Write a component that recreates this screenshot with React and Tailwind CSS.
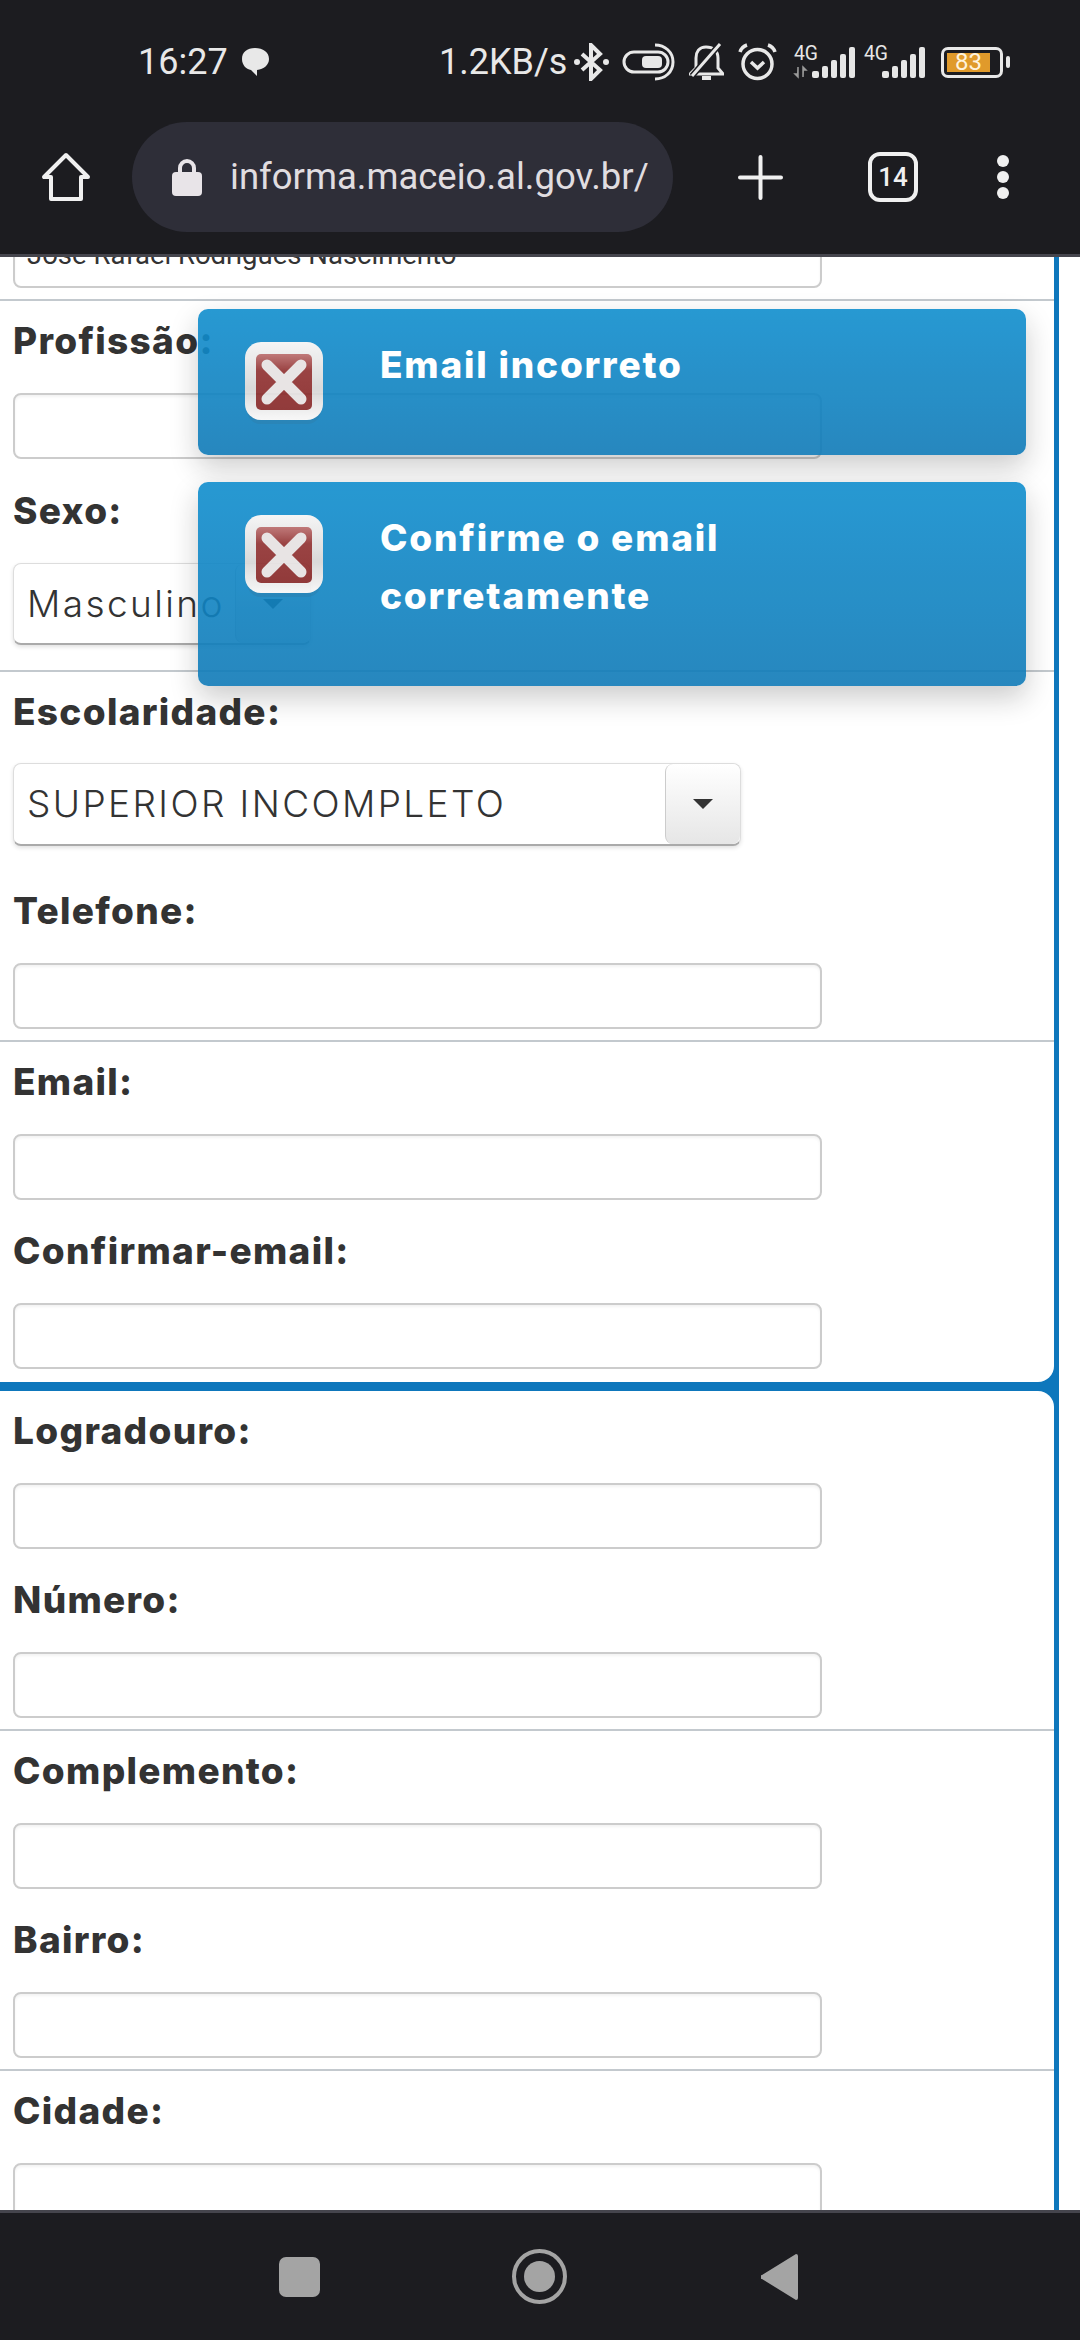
import React from 'react';

function SignalBars({ withArrows }) {
  return (
    <svg width="62" height="36" viewBox="0 0 62 36" fill="#e6e6e6" className="overflow-visible">
      <text x="0" y="16" fontFamily="Roboto, sans-serif" fontSize="20" textLength="24" lengthAdjust="spacingAndGlyphs" fill="#e6e6e6">4G</text>
      {withArrows && <path d="M4 23v10l-3-3h2M9 33V23l3 3h-2" fill="#9a9a9a" stroke="#9a9a9a" strokeWidth="1.500" />}
      <rect x="18" y="27" width="7" height="7" rx="2" />
      <rect x="28" y="22" width="6" height="12" rx="2" />
      <rect x="37" y="16" width="6" height="18" rx="2" />
      <rect x="46" y="10" width="6" height="24" rx="2" />
      <rect x="55" y="3" width="6" height="31" rx="2" />
    </svg>
  );
}

function ErrorIcon() {
  return (
    <svg width="78" height="82" viewBox="0 0 78 82" className="shrink-0">
      <defs>
        <linearGradient id="errOuter" x1="0" y1="0" x2="0" y2="1">
          <stop offset="0" stopColor="#f4f4f4" />
          <stop offset="0.6" stopColor="#d6d6d6" />
          <stop offset="1" stopColor="#f7f7f7" />
        </linearGradient>
        <linearGradient id="errInner" x1="0" y1="0" x2="0" y2="1">
          <stop offset="0" stopColor="#b96b6b" />
          <stop offset="0.3" stopColor="#8f2f2f" />
          <stop offset="1" stopColor="#862626" />
        </linearGradient>
      </defs>
      <rect x="2" y="6" width="74" height="76" rx="14" fill="#1b6c9c" opacity="0.35" />
      <rect x="0" y="0" width="78" height="78" rx="16" fill="url(#errOuter)" />
      <rect x="11" y="12" width="56" height="56" rx="5" fill="url(#errInner)" />
      <path d="M22 23 56 57M56 23 22 57" stroke="#e6e2e2" strokeWidth="11" strokeLinecap="round" />
    </svg>
  );
}

function Toast({ children }) {
  return (
    <div className="flex items-start pt-[27px] pb-[61px] pl-[47px] pr-[30px] rounded-[10px] opacity-90 bg-gradient-to-b from-[#108ece] to-[#107bb8] shadow-[0_12px_28px_rgba(0,0,0,0.22)]">
      <div className="mt-[6px] h-[52px]"><ErrorIcon /></div>
      <p className="ml-[57px] w-[480px] font-[Inter,sans-serif] font-extrabold text-[37px] leading-[58px] tracking-[1.8px] text-white">{children}</p>
    </div>
  );
}

function Label({ children, className = 'h-[92px]' }) {
  return (
    <div className={`${className} pl-[13px] pt-[20px] font-[Inter,sans-serif] font-extrabold text-[37px] leading-[40px] tracking-[1.3px] text-[#333]`}>
      {children}
    </div>
  );
}

function TextBox({ value }) {
  return (
    <div className="ml-[13px] w-[809px] h-[66px] flex items-center pl-[12px] rounded-[8px] border-2 border-[#ccc] bg-white shadow-[inset_0_2px_3px_rgba(0,0,0,0.05)] font-[Roboto,sans-serif] text-[27.5px] text-[#333] whitespace-nowrap">
      {value}
    </div>
  );
}

function SelectBox({ value, width, height }) {
  return (
    <div className={`${width} ${height} ml-[13px] flex items-center rounded-[8px] border border-[#ddd] border-b-2 border-b-[#aaa] bg-white shadow-[0_2px_4px_rgba(0,0,0,0.12)]`}>
      <span className="pl-[13px] font-[Inter,sans-serif] font-light text-[37px] tracking-[2.4px] text-[#333] whitespace-nowrap">{value}</span>
      <div className="ml-auto w-[75px] h-full flex items-center justify-center rounded-[8px] border-l border-[#ccc] bg-gradient-to-b from-white to-[#e6e6e6]">
        <div className="w-0 h-0 border-x-[10px] border-x-transparent border-t-[10px] border-t-[#333]" />
      </div>
    </div>
  );
}

export default function App() {
  return (
    <div className="relative w-[1080px] h-[2340px] flex flex-col overflow-hidden bg-white">
      {/* browser chrome */}
      <header className="relative z-10 h-[257px] shrink-0 bg-[#1c1c20] border-b-[3px] border-[#45454d] text-[#e8e8e8] font-[Roboto,sans-serif]">
        <div className="h-[122px] flex items-center pl-[138px] pt-[2px]">
          <span className="w-[89px] text-[36px] whitespace-nowrap">16:27</span>
          <svg className="ml-[14px]" width="29" height="30" viewBox="0 0 29 30" fill="#e8e8e8">
            <path d="M14 1C6 1 1 5 1 12c0 6 4 10 9 11l6 6v-6c7-1 12-5 12-11C28 5 22 1 14 1z" />
          </svg>
          <span className="ml-[169px] w-[126px] text-[36px] whitespace-nowrap">1.2KB/s</span>
          <svg className="ml-[9px]" width="35" height="38" viewBox="0 0 35 38" fill="none" stroke="#e8e8e8" strokeWidth="4">
            <path d="M8 11 26 27 17 36V2l9 9L8 27" />
            <circle cx="3" cy="19" r="3" fill="#e8e8e8" stroke="none" />
            <circle cx="32" cy="19" r="3" fill="#e8e8e8" stroke="none" />
          </svg>
          <svg className="ml-[13px]" width="53" height="38" viewBox="0 0 53 38" fill="none" stroke="#e8e8e8" strokeWidth="3">
            <rect x="2" y="9" width="44" height="20" rx="10" />
            <rect x="20" y="13" width="20" height="12" rx="4" fill="#e8e8e8" stroke="none" />
            <path d="M33 2c10 0 18 7 18 17s-8 17-18 17" />
          </svg>
          <svg className="ml-[14px]" width="35" height="38" viewBox="0 0 35 38" fill="none" stroke="#e8e8e8" strokeWidth="3">
            <path d="M1 31h33l-5-6V15C29 8 24 4 17 4 10 4 7 9 7 15v10z" />
            <path d="M13 35h9" strokeWidth="4" />
            <path d="M31 1 3 33" stroke="#1c1c20" strokeWidth="6" />
            <path d="M31 1 3 33" />
          </svg>
          <svg className="ml-[14px]" width="39" height="38" viewBox="0 0 39 38" fill="none" stroke="#e8e8e8" strokeWidth="3.500">
            <circle cx="19.500" cy="21" r="14.500" />
            <path d="M13 19l6.500 6 6.500-6" />
            <path d="M2 9c1-3 4-6 7-7M37 9c-1-3-4-6-7-7" />
          </svg>
          <div className="ml-[17px]"><SignalBars withArrows /></div>
          <div className="ml-[8px]"><SignalBars /></div>
          <div className="ml-[15px] flex items-center">
            <div className="w-[62px] h-[31px] rounded-[7px] border-[3px] border-[#e8e8e8] p-[3px] pr-[10px]">
              <div className="h-full bg-[#e09a2b] flex items-center justify-center text-[24px] leading-none text-[#fff3dc]">83</div>
            </div>
            <div className="ml-[3px] w-[4px] h-[12px] rounded-[2px] bg-[#e8e8e8]" />
          </div>
        </div>
        <div className="h-[110px] flex items-center">
          <svg className="ml-[41px]" width="50" height="50" viewBox="0 0 50 50" fill="none" stroke="#f0f0f0" strokeWidth="4" strokeLinejoin="round">
            <path d="M25 3 3 25h7v22h30V25h7z" />
          </svg>
          <div className="ml-[41px] w-[541px] h-[110px] rounded-full bg-[#2e2e38] flex items-center pl-[40px]">
            <svg width="30" height="38" viewBox="0 0 30 38">
              <path d="M8 16V10a7 7 0 0 1 14 0v6" fill="none" stroke="#e8e4e8" strokeWidth="4" />
              <rect x="0" y="14" width="30" height="24" rx="4" fill="#e8e4e8" />
            </svg>
            <span className="ml-[28px] text-[36.500px] text-[#e0dde0] whitespace-nowrap">informa.maceio.al.gov.br/</span>
          </div>
          <svg className="ml-[65px]" width="45" height="45" viewBox="0 0 45 45" stroke="#f0f0f0" strokeWidth="4" strokeLinecap="round">
            <path d="M22.500 2v41M2 22.500h41" />
          </svg>
          <div className="ml-[85px] w-[50px] h-[50px] rounded-[12px] border-[4px] border-[#f0f0f0] flex items-center justify-center text-[26px] font-medium text-[#f0f0f0]">14</div>
          <div className="ml-[79px] flex flex-col gap-[4px]">
            <div className="w-[12px] h-[12px] rounded-full bg-[#f0f0f0]" />
            <div className="w-[12px] h-[12px] rounded-full bg-[#f0f0f0]" />
            <div className="w-[12px] h-[12px] rounded-full bg-[#f0f0f0]" />
          </div>
        </div>
      </header>

      {/* page */}
      <main className="flex-1 min-h-0 overflow-hidden">
        <div className="w-[1059px] -mt-[35px] pr-[5px] bg-[#0e77bc] flex flex-col gap-[9px]">
          <div className="bg-white rounded-br-[16px]">
            <div className="pb-[11px] border-b-2 border-[#c3c9ce]">
              <TextBox value="José Rafael Rodrigues Nascimento" />
            </div>
            <div className="pb-[25px] border-b-2 border-[#c3c9ce]">
              <Label>Profissão:</Label>
              <TextBox />
              <div className="h-[12px]" />
              <Label>Sexo:</Label>
              <SelectBox value="Masculino" width="w-[298px]" height="h-[82px]" />
            </div>
            <div className="pb-[11px] border-b-2 border-[#c3c9ce]">
              <Label className="h-[91px]">Escolaridade:</Label>
              <SelectBox value="SUPERIOR INCOMPLETO" width="w-[728px]" height="h-[83px]" />
              <div className="h-[25px]" />
              <Label>Telefone:</Label>
              <TextBox />
            </div>
            <div className="pb-[13px]">
              <Label>Email:</Label>
              <TextBox />
              <div className="h-[11px]" />
              <Label>Confirmar-email:</Label>
              <TextBox />
            </div>
          </div>
          <div className="bg-white rounded-tr-[16px]">
            <div className="pb-[11px] border-b-2 border-[#c3c9ce]">
              <Label>Logradouro:</Label>
              <TextBox />
              <div className="h-[11px]" />
              <Label>Número:</Label>
              <TextBox />
            </div>
            <div className="pb-[11px] border-b-2 border-[#c3c9ce]">
              <Label>Complemento:</Label>
              <TextBox />
              <div className="h-[11px]" />
              <Label>Bairro:</Label>
              <TextBox />
            </div>
            <div>
              <Label>Cidade:</Label>
              <TextBox />
            </div>
          </div>
        </div>
      </main>

      {/* android nav bar */}
      <footer className="relative z-10 h-[130px] shrink-0 bg-[#1c1c20] border-t-[3px] border-[#45454d] flex items-center">
        <div className="ml-[279px] w-[41px] h-[40px] rounded-[7px] bg-[#a4a4a4]" />
        <div className="ml-[192px] w-[55px] h-[55px] rounded-full border-[4px] border-[#a4a4a4] flex items-center justify-center">
          <div className="w-[31px] h-[31px] rounded-full bg-[#a4a4a4]" />
        </div>
        <svg className="ml-[194px]" width="37" height="46" viewBox="0 0 37 46" fill="#a4a4a4">
          <path d="M35 0a2 2 0 0 1 2 2v42a2 2 0 0 1-2 2L1 25a2 2 0 0 1 0-4z" />
        </svg>
      </footer>

      {/* toasts */}
      <div className="absolute z-20 left-[198px] top-[309px] w-[828px] flex flex-col gap-[27px]">
        <Toast>Email incorreto</Toast>
        <Toast>Confirme o email corretamente</Toast>
      </div>
    </div>
  );
}
